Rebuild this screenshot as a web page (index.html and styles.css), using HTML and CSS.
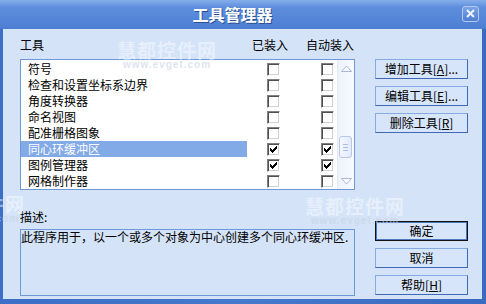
FILE: index.html
```html
<!DOCTYPE html>
<html lang="zh-CN">
<head>
    <meta charset="UTF-8">
    <title>工具管理器</title>
    <link rel="stylesheet" href="styles.css">
</head>
<body>
    <div class="window">
        <div class="titlebar">
            <span class="title">工具管理器</span>
            <span class="close">
                <svg width="9" height="9" viewBox="0 0 9 9"><path d="M1 1L8 8M8 1L1 8" stroke="#eef3fc" stroke-width="2"/></svg>
            </span>
        </div>
        <div class="content">
            <div class="section">
                <div class="heads">
                    <span class="h-name">工具</span>
                    <span class="h-load">已装入</span>
                    <span>自动装入</span>
                </div>
                <div class="list">
                    <div class="rows">
                        <div class="row"><span class="name">符号</span><span class="cb"></span><span class="cb"></span></div>
                        <div class="row"><span class="name">检查和设置坐标系边界</span><span class="cb"></span><span class="cb"></span></div>
                        <div class="row"><span class="name">角度转换器</span><span class="cb"></span><span class="cb"></span></div>
                        <div class="row"><span class="name">命名视图</span><span class="cb"></span><span class="cb"></span></div>
                        <div class="row"><span class="name">配准栅格图象</span><span class="cb"></span><span class="cb"></span></div>
                        <div class="row sel"><span class="name">同心环缓冲区</span><span class="cb on"></span><span class="cb on"></span></div>
                        <div class="row"><span class="name">图例管理器</span><span class="cb on"></span><span class="cb on"></span></div>
                        <div class="row"><span class="name">网格制作器</span><span class="cb"></span><span class="cb"></span></div>
                    </div>
                    <div class="scroll">
                        <div class="arrow"><svg width="11" height="7" viewBox="0 0 11 7"><polygon points="0.5,6.5 5.5,1 10.5,6.5" fill="#fbfcff" stroke="#a9b8d6"/></svg></div>
                        <div class="track">
                            <div class="thumb"><span></span><span></span><span></span></div>
                        </div>
                        <div class="arrow"><svg width="11" height="7" viewBox="0 0 11 7"><polygon points="0.5,0.5 5.5,6 10.5,0.5" fill="#fbfcff" stroke="#a9b8d6"/></svg></div>
                    </div>
                </div>
            </div>
            <div class="buttons top-btns">
                <button class="btn">增加工具[<u>A</u>]...</button>
                <button class="btn">编辑工具[<u>E</u>]...</button>
                <button class="btn">删除工具[<u>R</u>]</button>
            </div>
            <div class="section">
                <div class="label">描述:</div>
                <div class="desc">此程序用于，以一个或多个对象为中心创建多个同心环缓冲区.</div>
            </div>
            <div class="buttons bottom-btns">
                <button class="btn default">确定</button>
                <button class="btn">取消</button>
                <button class="btn">帮助[<u>H</u>]</button>
            </div>
        </div>
        <div class="mark mark-1">慧都控件网<small>www.evget.com</small></div>
        <div class="mark mark-2">慧都控件网<small>www.evget.com</small></div>
        <div class="mark mark-3">慧都控件网<small>www.evget.com</small></div>
    </div>
</body>
</html>
```

FILE: styles.css
```css
body {
    margin: 0;
    font-family: "Noto Sans CJK SC", sans-serif;
    font-size: 12px;
    color: #000;
}
.window {
    position: relative;
    width: 486px;
    height: 304px;
    overflow: hidden;
    display: flex;
    flex-direction: column;
    background: linear-gradient(90deg, #3c6fc6, #4678cc 50%, #3a6bc2);
}
.titlebar {
    height: 29px;
    flex: none;
    display: flex;
    align-items: center;
    padding-left: 3px;
    background: linear-gradient(#86aeec, #5d8edd 25%, #5385d8 70%, #4c7dd2);
}
.title {
    flex: 1;
    text-align: center;
    color: #fff;
    font-size: 16px;
    font-weight: bold;
    text-shadow: 1px 1px 0 #2c4f94;
    line-height: 20px;
    padding-bottom: 1px;
}
.close {
    width: 17px;
    height: 16px;
    box-sizing: border-box;
    margin-right: 7px;
    margin-bottom: 2px;
    border: 1px solid #b4c9ee;
    border-radius: 3px;
    background: linear-gradient(#7ba3e6, #4f7ed2);
    display: flex;
    align-items: center;
    justify-content: center;
}
.content {
    flex: 1;
    margin: 0 4px 5px 3px;
    padding: 8px 0 0 17px;
    background: #d4e3f8;
    display: grid;
    grid-template-columns: 335px 93px;
    column-gap: 20px;
    align-content: start;
}
.heads {
    display: flex;
    line-height: 16px;
    margin-bottom: 6px;
}
.h-name {
    width: 232px;
}
.h-load {
    width: 54px;
}
.list {
    height: 131px;
    box-sizing: border-box;
    border: 1px solid #6e98d8;
    background: #fff;
    display: flex;
}
.rows {
    flex: 1;
    padding-top: 1px;
}
.row {
    height: 16px;
    display: flex;
    align-items: center;
}
.name {
    width: 219px;
    padding-left: 7px;
    line-height: 16px;
    height: 16px;
}
.row.sel .name {
    background: #82aae6;
    color: #fff;
}
.cb {
    width: 13px;
    height: 13px;
    box-sizing: border-box;
    margin-left: 20px;
    background: #fff;
    border: 1px solid;
    border-color: #808080 #fff #fff #808080;
    box-shadow: inset 1px 1px 0 #505050, inset -1px -1px 0 #d0d0d0;
}
.cb + .cb {
    margin-left: 41px;
}
.cb.on {
    background: #fff url("data:image/svg+xml,%3Csvg xmlns='http://www.w3.org/2000/svg' width='11' height='11'%3E%3Cpath d='M2 4h1v3h-1zM3 5h1v3h-1zM4 6h1v3h-1zM5 5h1v3h-1zM6 4h1v3h-1zM7 3h1v3h-1zM8 2h1v3h-1z' fill='%23000'/%3E%3C/svg%3E") no-repeat 0 0;
}
.scroll {
    width: 16px;
    display: flex;
    flex-direction: column;
    border-left: 1px solid #e3eaf7;
    background: linear-gradient(90deg, #eef2fb, #f8faff);
}
.arrow {
    height: 16px;
    display: flex;
    align-items: center;
    justify-content: center;
}
.track {
    flex: 1;
    padding-top: 60px;
}
.thumb {
    width: 13px;
    height: 22px;
    box-sizing: border-box;
    margin-left: 1px;
    border: 1px solid #b6c7ea;
    border-radius: 3px;
    background: linear-gradient(90deg, #f4f7fe, #e2eafb);
    display: flex;
    flex-direction: column;
    align-items: center;
    justify-content: center;
    gap: 2px;
}
.thumb span {
    width: 5px;
    height: 1px;
    background: #a9bbe0;
}
.buttons {
    display: flex;
    flex-direction: column;
    gap: 7px;
}
.top-btns {
    margin-top: 22px;
}
.bottom-btns {
    margin-top: 31px;
}
.btn {
    width: 93px;
    height: 20px;
    box-sizing: border-box;
    padding: 0;
    font: inherit;
    line-height: 16px;
    color: #000;
    background: #d6e5f9;
    border: 1px solid;
    border-color: #86aae2 #3d69b8 #3d69b8 #86aae2;
}
.btn.default {
    border-color: #111;
    box-shadow: inset 0 0 0 1px #4d78c2;
}
.label {
    margin-top: 19px;
    line-height: 16px;
    margin-bottom: 4px;
}
.desc {
    height: 67px;
    box-sizing: border-box;
    border: 1px solid #6e98d8;
    line-height: 13px;
    white-space: nowrap;
}
.mark {
    position: absolute;
    color: rgba(255, 255, 255, 0.45);
    font-size: 19px;
    font-weight: bold;
    letter-spacing: 1px;
    line-height: 20px;
    width: 100px;
    text-align: center;
}
.mark small {
    display: block;
    font-family: "Liberation Sans", sans-serif;
    font-size: 10px;
    line-height: 10px;
    letter-spacing: 1px;
    color: rgba(200, 210, 225, 0.6);
}
.mark-1 {
    left: 117px;
    top: 40px;
}
.mark-2 {
    left: 305px;
    top: 196px;
}
.mark-3 {
    left: -75px;
    top: 194px;
}
```
